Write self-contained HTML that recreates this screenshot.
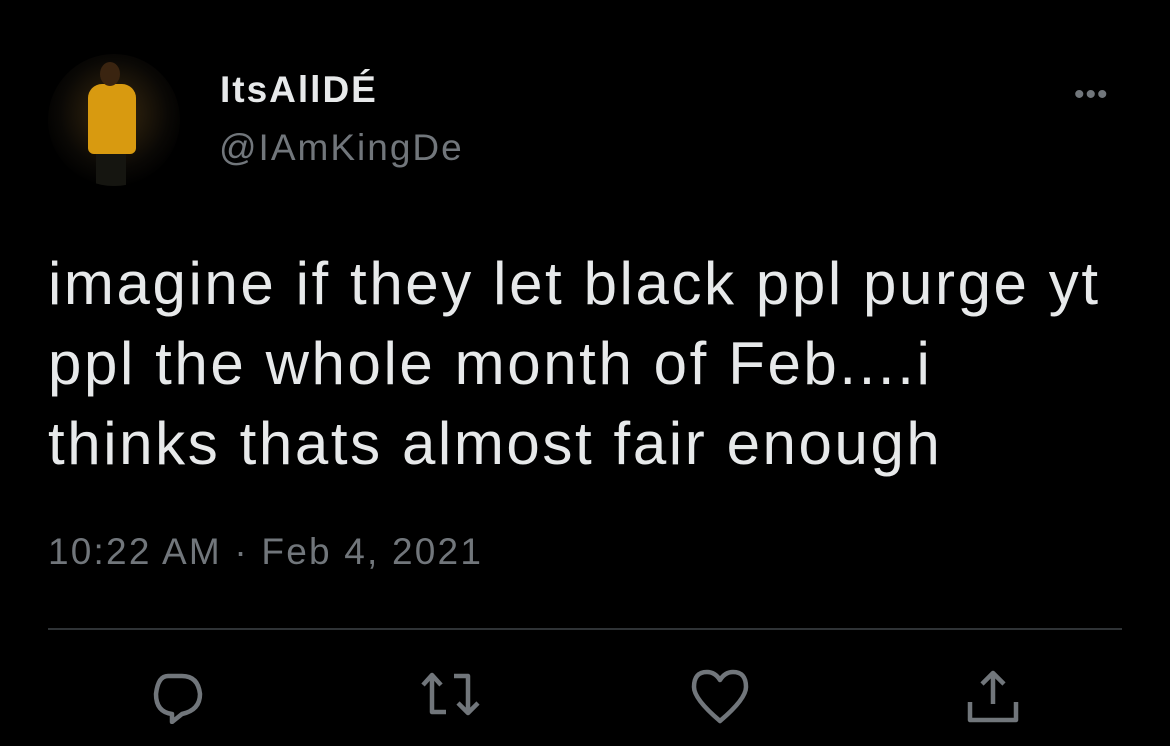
<html><head><style>
body{margin:0;width:1170px;height:746px;background:#000;font-family:"Liberation Sans",sans-serif;position:relative;overflow:hidden}
.a{position:absolute}
</style></head><body>
<div class="a" style="left:48px;top:54px;width:132px;height:132px;border-radius:50%;background:radial-gradient(circle at 50% 45%,#3a2a10 0%,#0a0805 55%,#000 75%);overflow:hidden">
<div class="a" style="left:40px;top:30px;width:48px;height:70px;background:#d89a10;border-radius:14px 14px 6px 6px"></div>
<div class="a" style="left:52px;top:8px;width:20px;height:24px;background:#3a2410;border-radius:50%"></div>
<div class="a" style="left:48px;top:100px;width:30px;height:32px;background:#151510"></div>
</div>
<div class="a" style="left:220px;top:69px;font-size:37px;font-weight:bold;color:#e7e9ea;letter-spacing:2px">ItsAllDÉ</div>
<div class="a" style="left:219px;top:127px;font-size:37px;color:#71767b;letter-spacing:2px">@IAmKingDe</div>
<div class="a" style="left:1074px;top:78px;font-size:30px;color:#71767b;letter-spacing:1px">•••</div>
<div class="a" style="left:48px;top:244px;font-size:60px;line-height:80px;color:#e7e9ea;width:1120px;letter-spacing:2.6px">imagine if they let black ppl purge yt<br>ppl the whole month of Feb....i<br>thinks thats almost fair enough</div>
<div class="a" style="left:48px;top:531px;font-size:37px;color:#71767b;letter-spacing:2.2px">10:22 AM · Feb 4, 2021</div>
<div class="a" style="left:48px;top:628px;width:1074px;height:2px;background:#2f3336"></div>
<svg class="a" style="left:150px;top:664px" width="1000" height="60" viewBox="0 0 1000 60" fill="none" stroke="#71767b" stroke-width="4.5" stroke-linejoin="round">
<path d="M18 12 h14 q16 0 18 18 q0 16 -18 20 l-10 8 v-8 q-16-2 -16-20 q2-18 12-18z"/>
<path d="M282 32 v-20 M273 21 l9-10 9 10 M282 32 v16 h14 M304 12 h14 v36 M308 39 l10 10 10-10"/>
<path d="M570 57 q-26-22 -26-34 q0-15 13-15 q8 0 13 8 q5-8 13-8 q13 0 13 15 q0 12 -26 34z"/>
<path d="M843 40 v-30 M832 20 l11-11 11 11 M820 38 v18 h46 v-18"/>
</svg>
</body></html>
